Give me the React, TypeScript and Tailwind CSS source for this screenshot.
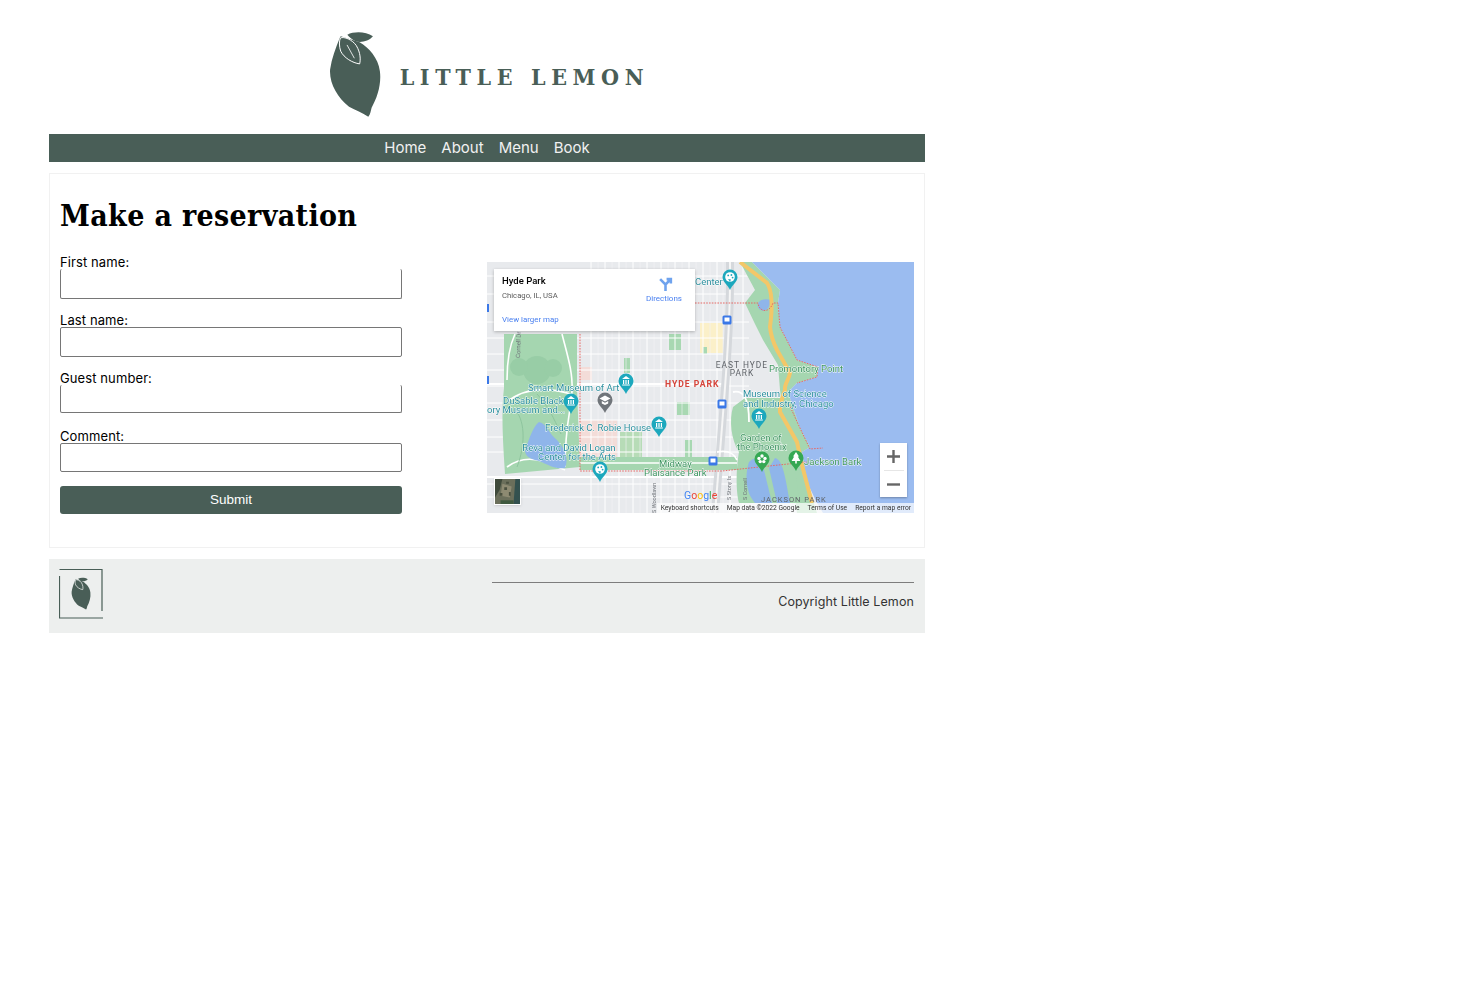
const GREEN = "#495e57"

function Lemon({ className, veins = "#ffffff" }: { className: string; veins?: string }) {
  return (
    <svg viewBox="30 34 156 262" className={className}>
      <path
        d="M62 55 C50 85 38 115 33 150 C30 190 55 235 90 262 C110 272 130 280 148 292 C155 285 155 275 158 265 C175 235 188 195 183 155 C178 115 150 85 122 68 L65 50 Z"
        fill={GREEN}
      />
      <path d="M85 45 C105 35 140 35 162 50 C150 65 125 70 110 65 C100 60 90 52 85 45 Z" fill={GREEN} />
      <path
        d="M64 55 C75 50 100 60 112 78 C125 100 125 120 122 133 C100 130 75 115 65 95 C60 80 60 65 64 55 Z"
        fill={GREEN}
        stroke={veins}
        strokeWidth="3"
      />
      <path d="M84 76 L106 116" stroke={veins} strokeWidth="2.5" />
    </svg>
  )
}

function Field({ label, inputClass }: { label: string; inputClass: string }) {
  return (
    <div className="flex flex-col">
      <label className="pt-[2px] text-[13px] leading-[13px] font-normal tracking-[0.1px] text-black font-['Inter',sans-serif]">{label}</label>
      <input className={`w-[342px] bg-white border-x border-b border-[#767676] rounded-[2px] ${inputClass}`} />
    </div>
  )
}

type PinIcon = "museum" | "palette" | "cap" | "flower" | "tree"

function Pin({ x, y, color = "#1fa8bd", icon = "museum" }: { x: number; y: number; color?: string; icon?: PinIcon }) {
  return (
    <g transform={`translate(${x} ${y})`}>
      <path d="M0 0 C-2 -5 -7.5 -8 -7.5 -13 A7.5 7.5 0 1 1 7.5 -13 C7.5 -8 2 -5 0 0 Z" fill={color} />
      {icon === "museum" && (
        <path d="M-3.8 -9.5 H3.8 V-8.5 H-3.8 Z M-3 -14 H-1.8 V-10 H-3 Z M-0.6 -14 H0.6 V-10 H-0.6 Z M1.8 -14 H3 V-10 H1.8 Z M0 -18 L4 -15 H-4 Z" fill="#ffffff" />
      )}
      {icon === "palette" && (
        <g>
          <circle cx="0" cy="-13" r="4.8" fill="#ffffff" />
          <circle cx="-1.8" cy="-14.6" r="0.9" fill={color} />
          <circle cx="1.4" cy="-15" r="0.9" fill={color} />
          <circle cx="2.6" cy="-12.4" r="0.9" fill={color} />
          <path d="M-2 -11 L0 -8.2 L1 -10.4 Z" fill={color} />
        </g>
      )}
      {icon === "cap" && <path d="M0 -17.5 L5.5 -14.5 L0 -11.5 L-5.5 -14.5 Z M-3.2 -12 L0 -10.2 L3.2 -12 V-9.5 L0 -8 L-3.2 -9.5 Z" fill="#ffffff" />}
      {icon === "flower" && (
        <g fill="#ffffff">
          <circle cx="0" cy="-16" r="1.7" />
          <circle cx="-3" cy="-13.6" r="1.7" />
          <circle cx="3" cy="-13.6" r="1.7" />
          <circle cx="-1.8" cy="-10.4" r="1.7" />
          <circle cx="1.8" cy="-10.4" r="1.7" />
        </g>
      )}
      {icon === "tree" && <path d="M0 -19 L3 -14.5 H1.8 L4.4 -10 H0.8 V-7.5 H-0.8 V-10 H-4.4 L-1.8 -14.5 H-3 Z" fill="#ffffff" />}
    </g>
  )
}

function MapLabel({ x, y, text, color = "#2c8f9e", size = 9.5, anchor = "start" }: { x: number; y: number; text: string; color?: string; size?: number; anchor?: "start" | "middle" }) {
  return (
    <text
      x={x}
      y={y}
      fill={color}
      fontSize={size}
      textAnchor={anchor}
      fontFamily="Roboto, sans-serif"
      stroke="#ffffff"
      strokeWidth="0.8"
      paintOrder="stroke"
    >
      {text}
    </text>
  )
}

const verticalStreets = [104, 118, 132, 146, 160, 174, 188, 202, 216, 230, 243, 256]
const sideStreets = [111, 125, 139, 153, 167, 181, 195, 209, 223, 236]
const horizontalStreets = [14, 32, 60, 76, 92, 108, 124, 141, 158, 175, 190, 222, 235]

function MapDrawing() {
  return (
    <svg viewBox="0 0 427 251" className="block w-full h-full">
      <defs>
        <filter id="soft" x="0" y="0" width="100%" height="100%">
          <feGaussianBlur stdDeviation="0.4" />
        </filter>
      </defs>
      <g filter="url(#soft)">
        <rect width="427" height="251" fill="#e8eaed" />

        {/* land use under the streets */}
        <path d="M213 61 H236 V91 H213 Z" fill="#fbf0c9" />
        <path d="M93 158 H130 V200 H93 Z" fill="#f3dcd8" />
        <path d="M93 105 H105 V118 H93 Z" fill="#f3dcd8" />
        <path d="M137 96 H143 V111 H137 Z" fill="#a8d8b2" />
        <path d="M133 170 H155 V200 H133 Z" fill="#b7dcb7" />
        <path d="M190 140 H203 V153 H190 Z" fill="#a8d8b2" />
        <path d="M198 178 H205 V201 H198 Z" fill="#a8d8b2" />
        <path d="M182 72 H194 V88 H182 Z" fill="#a8d8b2" />
        <path d="M216 85 H220 V92 H216 Z" fill="#a8d8b2" />

        {/* streets */}
        {sideStreets.map((x) => (
          <path key={x} d={`M${x} 0 V251`} stroke="#f3f4f6" strokeWidth="0.6" />
        ))}
        {verticalStreets.map((x) => (
          <path key={x} d={`M${x} 0 V251`} stroke="#ffffff" strokeWidth="1" />
        ))}
        {horizontalStreets.map((y) => (
          <path key={y} d={`M0 ${y} H262`} stroke="#ffffff" strokeWidth="1" />
        ))}
        <path d="M0 215 H260" stroke="#ffffff" strokeWidth="2.2" />
        <path d="M0 122 H235" stroke="#ffffff" strokeWidth="2.2" />
        <path d="M243 0 C244 60 238 130 228 251" stroke="#d5d8dc" strokeWidth="8" fill="none" />
        <path d="M243 0 C244 60 238 130 228 251" stroke="#f6f6f6" strokeWidth="2" fill="none" />

        {/* Washington park */}
        <path d="M17 72 H90 V126 L93 205 L18 212 C16 180 14 150 17 126 Z" fill="#a5d6b0" />
        <circle cx="50" cy="108" r="14" fill="#98cda6" />
        <circle cx="32" cy="105" r="9" fill="#98cda6" />
        <circle cx="66" cy="106" r="9" fill="#98cda6" />
        <path d="M28 72 C22 85 20 100 20 118 M75 72 C80 92 86 110 85 128 C85 145 78 160 78 205 M20 140 C38 125 60 125 84 132 M20 205 C40 190 60 200 78 208" stroke="#ffffff" strokeWidth="1.6" fill="none" />
        <path d="M30 150 C40 165 36 190 30 205 M50 132 C62 145 66 155 74 172" stroke="#8ec59e" strokeWidth="1" fill="none" />
        <path d="M38 188 C42 178 46 164 52 160 C60 162 62 172 70 178 C78 186 82 198 78 206 C66 208 58 200 48 198 C42 196 38 194 38 188 Z" fill="#8fb5ea" />

        {/* Midway */}
        <path d="M93 195 H250 V208 H93 Z" fill="#a5d6b0" />
        <path d="M93 201 H250" stroke="#ffffff" strokeWidth="1.6" />

        {/* Lake shore park */}
        <path
          d="M253 0 L265 0 L293 28 L291 41 L293 65 L310 98 L331 105 L330 115 L310 121 L303 128 L303 136 L313 166 L323 185 L315 190 L320 220 L330 251 H310 L293 128 L291 103 L276 78 L268 62 L258 41 L268 28 Z"
          fill="#a5d6b0"
        />
        <path d="M246 145 L258 136 L297 136 L313 241 H252 C248 225 250 200 252 190 C244 178 242 158 246 145 Z" fill="#a5d6b0" />
        <path d="M262 200 C268 194 274 196 276 204 L285 241 H268 C258 230 258 212 262 200 Z" fill="#8fb5ea" />
        <path d="M288 196 C296 198 298 214 303 241 H290 L282 206 Z" fill="#8fb5ea" />
        <path d="M246 130 C256 128 262 135 262 160 M230 190 C240 188 246 190 250 198" stroke="#ffffff" strokeWidth="1.8" fill="none" />

        {/* Lake */}
        <path
          d="M265 0 L293 28 L291 41 L293 65 L310 98 L331 105 L330 115 L310 121 L303 128 L303 136 L313 166 L323 185 L315 190 L320 220 L330 241 L336 251 H427 V0 Z"
          fill="#9bbcf0"
        />
        <path d="M284 38 C282 50 276 50 272 47 C268 41 274 35 284 38 Z" fill="#8fb5ea" />

        {/* Lake Shore Drive */}
        <path
          d="M253 0 L280 21 C286 30 285 50 283 65 C284 75 287 82 290 88 L303 111 C302 118 297 122 298 128 C295 136 292 144 293 150 L310 180 L315 203 L325 241"
          stroke="#f3c768"
          strokeWidth="4"
          fill="none"
        />

        {/* neighbourhood boundaries */}
        <path
          d="M208 41 H271 C272 50 282 52 286 41 L291 41 L293 65 L310 98 L331 105 L330 115 L310 121 M93 72 V209 H235 L263 206 L320 200 M301 140 L313 166 L323 187 L336 186"
          stroke="#e66a67"
          strokeWidth="1"
          strokeDasharray="1.6 1.2"
          fill="none"
        />

        {/* small road names */}
        <text transform="translate(33 96) rotate(-88)" fontSize="6" fill="#6d7278" fontFamily="Roboto, sans-serif">Cornell Dr</text>
        <text transform="translate(169 251) rotate(-90)" fontSize="5.5" fill="#6d7278" fontFamily="Roboto, sans-serif">S Woodlawn</text>
        <text transform="translate(244 238) rotate(-90)" fontSize="5.5" fill="#6d7278" fontFamily="Roboto, sans-serif">S Stony Is</text>
        <text transform="translate(260 238) rotate(-90)" fontSize="5.5" fill="#6d7278" fontFamily="Roboto, sans-serif">S Cornell</text>

        {/* transit markers */}
        {[
          [240, 58],
          [235, 142],
          [226, 199],
        ].map(([x, y]) => (
          <g key={x}>
            <rect x={x - 4.5} y={y - 4.5} width="9" height="9" rx="1.5" fill="#3b78e7" />
            <rect x={x - 2.5} y={y - 2.5} width="5" height="4" fill="#ffffff" />
          </g>
        ))}
        <rect x="0" y="114" width="2" height="8" fill="#3b78e7" />
        <rect x="0" y="42" width="2" height="8" fill="#3b78e7" />

        {/* pins */}
        <Pin x={243} y={28} icon="palette" />
        <Pin x={139} y={132} />
        <Pin x={84} y={152} />
        <Pin x={118} y={151} color="#70757a" icon="cap" />
        <Pin x={172} y={175} />
        <Pin x={113} y={220} icon="palette" />
        <Pin x={272} y={167} />
        <Pin x={275} y={210} color="#34a853" icon="flower" />
        <Pin x={309} y={209} color="#34a853" icon="tree" />

        {/* labels */}
        <MapLabel x={208} y={23} text="Center" />
        <MapLabel x={41} y={129} text="Smart Museum of Art" />
        <MapLabel x={16} y={142} text="DuSable Black" />
        <MapLabel x={0} y={151} text="ory Museum and..." />
        <MapLabel x={58} y={169} text="Frederick C. Robie House" />
        <MapLabel x={82} y={189} text="Reva and David Logan" anchor="middle" />
        <MapLabel x={90} y={198} text="Center for the Arts" anchor="middle" />
        <MapLabel x={256} y={135} text="Museum of Science" />
        <MapLabel x={256} y={145} text="and Industry, Chicago" />
        <MapLabel x={253} y={179} text="Garden of" color="#3d9460" />
        <MapLabel x={250} y={188} text="the Phoenix" color="#3d9460" />
        <MapLabel x={282} y={110} text="Promontory Point" color="#3d9460" />
        <MapLabel x={317} y={203} text="Jackson Bark" color="#3d9460" />
        <MapLabel x={172} y={205} text="Midway" color="#3d9460" />
        <MapLabel x={157} y={214} text="Plaisance Park" color="#3d9460" />
        <text x="255" y="106" fontSize="8.4" letterSpacing="1" fill="#5f6368" textAnchor="middle" fontFamily="Roboto, sans-serif">EAST HYDE</text>
        <text x="255" y="114" fontSize="8.4" letterSpacing="1" fill="#5f6368" textAnchor="middle" fontFamily="Roboto, sans-serif">PARK</text>
        <text x="178" y="125" fontSize="8.6" fontWeight="700" letterSpacing="1" fill="#d6443a" fontFamily="Roboto, sans-serif">HYDE PARK</text>
        <text x="274" y="240" fontSize="7.5" letterSpacing="1" fill="#5f6368" fontFamily="Roboto, sans-serif">JACKSON PARK</text>

        {/* Google wordmark */}
        <text x="197" y="237" fontSize="10.5" fontFamily="Roboto, sans-serif">
          <tspan fill="#4285f4">G</tspan>
          <tspan fill="#ea4335">o</tspan>
          <tspan fill="#fbbc05">o</tspan>
          <tspan fill="#4285f4">g</tspan>
          <tspan fill="#34a853">l</tspan>
          <tspan fill="#ea4335">e</tspan>
        </text>
      </g>
    </svg>
  )
}

function ReservationMap() {
  return (
    <div className="relative w-[427px] h-[251px] overflow-hidden font-['Roboto',sans-serif]">
      <MapDrawing />

      {/* place card */}
      <div className="absolute left-[7px] top-[7px] w-[201px] h-[62px] bg-white shadow-[0_1px_3px_rgba(0,0,0,0.25)]">
        <p className="absolute left-[8px] top-[6px] text-[9.5px] leading-[12px] font-medium text-black">Hyde Park</p>
        <p className="absolute left-[8px] top-[22px] text-[7.7px] leading-[10px] text-[#5b5b5b]">Chicago, IL, USA</p>
        <a className="absolute left-[8px] top-[46px] text-[7.9px] leading-[10px] text-[#4a80f0]">View larger map</a>
        <svg viewBox="0 0 14 14" className="absolute left-[164px] top-[8px] w-[15px] h-[15px]">
          <path d="M2 2 L7 7 V13 M7 7 L11 3 M8 2 H12 V6" stroke="#6fa3ee" strokeWidth="2.4" fill="none" />
        </svg>
        <p className="absolute left-[152px] top-[25px] text-[8px] leading-[10px] text-[#4a80f0]">Directions</p>
      </div>

      {/* satellite thumbnail */}
      <div className="absolute left-[7px] top-[216px] w-[27px] h-[27px] border border-white bg-[#5e6653] overflow-hidden shadow-sm">
        <svg viewBox="0 0 27 27" className="block w-full h-full">
          <rect width="27" height="27" fill="#6b6f5b" />
          <path d="M0 0 H8 L5 12 L0 20 Z" fill="#3f4a3b" />
          <path d="M22 0 H27 V27 H20 Z" fill="#33514f" />
          <path d="M8 5 L18 8 L16 20 L6 18 Z" fill="#8d8a72" />
          <path d="M10 9 h3 v3 h-3 Z M5 15 h3 v3 h-3 Z M15 14 h2 v4 h-2 Z M12 3 h3 v2 h-3 Z" fill="#4b5140" />
          <path d="M6 23 H20 V27 H6 Z" fill="#3f5a3f" />
        </svg>
      </div>

      {/* zoom control */}
      <div className="absolute left-[393px] top-[181px] w-[27px] h-[54px] bg-white shadow-[0_1px_2px_rgba(0,0,0,0.3)] flex flex-col items-center justify-center">
        <svg viewBox="0 0 13 13" className="w-[13px] h-[13px]">
          <path d="M0 6.5 H13 M6.5 0 V13" stroke="#666666" strokeWidth="2.4" />
        </svg>
        <div className="w-[20px] h-px bg-[#e6e6e6] my-[7px]" />
        <svg viewBox="0 0 13 13" className="w-[13px] h-[13px]">
          <path d="M0 6.5 H13" stroke="#666666" strokeWidth="2.4" />
        </svg>
      </div>

      {/* attribution */}
      <div className="absolute right-0 bottom-0 w-[257px] h-[10px] bg-white/70 text-[6.7px] leading-[10px] text-[#333333] flex justify-end gap-[8px] pr-[3px] whitespace-nowrap">
        <span>Keyboard shortcuts</span>
        <span>Map data ©2022 Google</span>
        <span>Terms of Use</span>
        <span>Report a map error</span>
      </div>
    </div>
  )
}

export default function App() {
  return (
    <div className="ml-[49px] w-[876px] bg-white">
      <header className="h-[134px] flex items-center justify-center gap-[19px] pt-[15px] pl-[4px]">
        <Lemon className="w-[52px] h-[87px] shrink-0" />
        <span className="pt-[4px] text-[23px] leading-none font-bold tracking-[5.65px] text-[#495e57] font-['DejaVu_Serif_Condensed','DejaVu_Serif',serif]">LITTLE LEMON</span>
      </header>

      <nav className="h-[28px] bg-[#495e57] flex items-center justify-center gap-[15px] pt-[1px] text-[15px] text-[#f1f1f1] font-['Inter',sans-serif]">
        <a>Home</a>
        <a>About</a>
        <a>Menu</a>
        <a>Book</a>
      </nav>

      <main className="mt-[11px] h-[375px] border border-[#f1f1f1] px-[10px] pt-[24px]">
        <h1 className="text-[30px] leading-[36px] font-bold tracking-[0.35px] text-black font-['DejaVu_Serif_Condensed','DejaVu_Serif',serif]">Make a reservation</h1>
        <div className="flex justify-between mt-[20px]">
          <form className="w-[342px] flex flex-col">
            <Field label="First name:" inputClass="h-[30px]" />
            <div className="h-[13px]" />
            <Field label="Last name:" inputClass="h-[30px] border-t" />
            <div className="h-[13px]" />
            <Field label="Guest number:" inputClass="h-[28px]" />
            <div className="h-[15px]" />
            <Field label="Comment:" inputClass="h-[29px] border-t" />
            <button type="button" className="mt-[14px] h-[28px] w-[342px] bg-[#495e57] rounded-[3px] text-white text-[13.5px] font-medium font-['Liberation_Sans',sans-serif]">Submit</button>
          </form>
          <div className="mt-[8px]">
            <ReservationMap />
          </div>
        </div>
      </main>

      <footer className="mt-[11px] h-[74px] bg-[#edefee] flex justify-between pl-[10px] pr-[11px] pt-[10px]">
        <svg viewBox="0 0 44 50" className="w-[44px] h-[50px]">
          <path d="M0.5 0.5 H43 V42 M0.5 7 V49 H44" stroke="#495e57" strokeWidth="1.2" fill="none" />
          <g transform="translate(12 8) scale(0.125)">
            <path d="M34 23 C22 53 10 83 5 118 C2 158 27 203 62 230 C82 240 102 248 120 260 C127 253 127 243 130 233 C147 203 160 163 155 123 C150 83 122 53 94 36 L37 18 Z" fill="#495e57" />
            <path d="M57 13 C77 3 112 3 134 18 C122 33 97 38 82 33 C72 28 62 20 57 13 Z" fill="#495e57" />
            <path d="M36 23 C47 18 72 28 84 46 C97 68 97 88 94 101 C72 98 47 83 37 63 C32 48 32 33 36 23 Z" fill="#495e57" stroke="#edefee" strokeWidth="6" />
          </g>
        </svg>
        <div className="w-[422px] pt-[13px] text-right">
          <div className="h-px bg-[#7d7d7d]" />
          <p className="mt-[11px] text-[12.5px] leading-[16px] tracking-[0.1px] text-[#333333] font-['Inter',sans-serif]">Copyright Little Lemon</p>
        </div>
      </footer>
    </div>
  )
}
